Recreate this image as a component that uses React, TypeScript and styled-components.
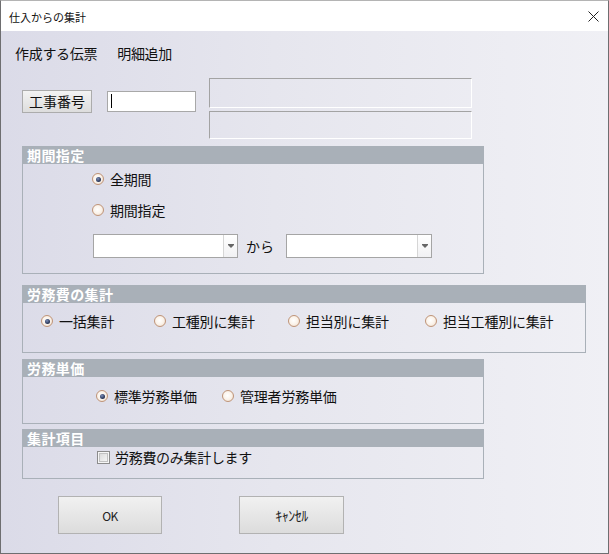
import React from 'react';
import styled, { createGlobalStyle } from 'styled-components';

const GlobalStyle = createGlobalStyle`
  html, body {
    margin: 0;
    padding: 0;
    background: #ffffff;
  }
  * {
    box-sizing: border-box;
  }
`;

const FONT = `"Noto Sans CJK JP", "Noto Sans", sans-serif`;

const Window = styled.div`
  width: 609px;
  height: 554px;
  display: flex;
  flex-direction: column;
  border: 1px solid #6e6e70;
  border-top-color: #b4b4b4;
  font-family: ${FONT};
  color: #111;
  overflow: hidden;
`;

const TitleBar = styled.div`
  height: 30px;
  flex-shrink: 0;
  display: flex;
  align-items: center;
  justify-content: space-between;
  padding: 0 9px 0 8px;
  background: #ffffff;
`;

const Title = styled.span`
  font-size: 11px;
  line-height: 14px;
  margin-top: 1px;
`;

const CloseIcon = styled.svg`
  width: 11px;
  height: 11px;
  margin-top: 1px;
`;

const Body = styled.div`
  flex: 1;
  display: flex;
  flex-direction: column;
  align-items: flex-start;
  padding: 12px 0 0 21px;
  background: linear-gradient(to right, #dbdbe8 0%, #e6e6ee 45%, #f0f0f5 100%);
`;

const InfoRow = styled.div`
  display: flex;
  gap: 20px;
  height: 20px;
  margin-left: -7px;
  font-size: 14px;
  line-height: 20px;
  letter-spacing: -0.3px;
`;

const JobRow = styled.div`
  display: flex;
  align-items: flex-start;
  margin-top: 15px;
`;

const JobButton = styled.button`
  width: 70px;
  height: 23px;
  margin-top: 12px;
  padding: 0;
  font-family: ${FONT};
  font-size: 14px;
  line-height: 21px;
  color: #111;
  border: 1px solid #acacac;
  background: linear-gradient(#f3f3f3, #dddddd);
`;

const TextInput = styled.div`
  position: relative;
  width: 89px;
  height: 21px;
  margin: 13px 0 0 15px;
  background: #ffffff;
  border: 1px solid #a8a8a8;
`;

const Caret = styled.span`
  position: absolute;
  left: 3px;
  top: 2px;
  width: 1px;
  height: 14px;
  background: #000;
`;

const DisplayStack = styled.div`
  display: flex;
  flex-direction: column;
  gap: 3px;
  margin-left: 13px;
`;

const DisplayBox = styled.div<{ h: number }>`
  width: 263px;
  height: ${({ h }) => h}px;
  border-top: 1px solid #a3a3a3;
  border-left: 1px solid #a3a3a3;
  border-right: 1px solid #ffffff;
  border-bottom: 1px solid #ffffff;
`;

const Group = styled.div<{ w: number; h: number; mt: number }>`
  width: ${({ w }) => w}px;
  height: ${({ h }) => h}px;
  margin-top: ${({ mt }) => mt}px;
  display: flex;
  flex-direction: column;
  border: 1px solid #a9b0b8;
  border-top: none;
`;

const GroupHeader = styled.div`
  height: 18px;
  margin: 0 -1px;
  padding-left: 5px;
  background: #a9b0b8;
  color: #ffffff;
  font-size: 14px;
  font-weight: 700;
  line-height: 18px;
  letter-spacing: 0.4px;
`;

const GroupContent = styled.div<{ pl: number; pt: number }>`
  display: flex;
  flex-direction: column;
  align-items: flex-start;
  padding: ${({ pt }) => pt}px 0 0 ${({ pl }) => pl}px;
`;

const OptionRow = styled.div<{ mt?: number }>`
  display: flex;
  align-items: center;
  height: 20px;
  margin-top: ${({ mt }) => mt || 0}px;
`;

const RadioItem = styled.label<{ w?: number }>`
  display: flex;
  align-items: center;
  gap: 6px;
  height: 20px;
  width: ${({ w }) => (w ? `${w}px` : 'auto')};
  font-size: 14px;
  line-height: 20px;
  letter-spacing: -0.2px;
  white-space: nowrap;
`;

const RadioDot = styled.span<{ checked?: boolean }>`
  position: relative;
  width: 12px;
  height: 12px;
  flex-shrink: 0;
  border-radius: 50%;
  border: 1px solid #bf9478;
  background: radial-gradient(circle at 45% 45%, #ffffff 0%, #fbf3ea 50%, #ead5c2 100%);

  &::after {
    content: '';
    display: ${({ checked }) => (checked ? 'block' : 'none')};
    position: absolute;
    left: 2.5px;
    top: 2.5px;
    width: 5px;
    height: 5px;
    border-radius: 50%;
    background: radial-gradient(circle at 40% 35%, #7d8fb8 0%, #2c3a5e 60%, #1c2540 100%);
  }
`;

const CheckItem = styled.label`
  display: flex;
  align-items: center;
  gap: 5px;
  height: 20px;
  font-size: 14px;
  line-height: 20px;
  letter-spacing: -0.3px;
`;

const CheckBox = styled.span`
  position: relative;
  width: 13px;
  height: 13px;
  flex-shrink: 0;
  border: 1px solid #8c8c8c;
  background: #f6f6f6;

  &::after {
    content: '';
    position: absolute;
    inset: 1px;
    border: 1px solid #c2c2c2;
    background: linear-gradient(135deg, #dcdcdc, #f5f5f5);
  }
`;

const ComboRow = styled.div`
  display: flex;
  align-items: center;
  margin-top: 14px;
  margin-left: 1px;
`;

const Combo = styled.div<{ w: number }>`
  display: flex;
  width: ${({ w }) => w}px;
  height: 24px;
  background: #ffffff;
  border: 1px solid #a5a5a5;
`;

const ComboField = styled.div`
  flex: 1;
`;

const ComboArrow = styled.div`
  width: 14px;
  display: flex;
  align-items: center;
  justify-content: center;
  border-left: 1px solid #d6d6d6;
  background: linear-gradient(#ffffff, #f1f1f3);
`;

const KaraLabel = styled.span`
  margin: 0 12px 0 8px;
  font-size: 14px;
  line-height: 20px;
`;

const ButtonRow = styled.div`
  display: flex;
  gap: 77px;
  margin: 17px 0 0 36px;
`;

const DialogButton = styled.button<{ w: number; fs: number }>`
  width: ${({ w }) => w}px;
  height: 38px;
  padding: 0;
  font-family: ${FONT};
  font-size: ${({ fs }) => fs}px;
  font-weight: 400;
  color: #222;
  letter-spacing: -0.5px;
  border: 1px solid #b2b2b2;
  background: linear-gradient(#f1f1f1, #dcdcdc);
`;

const Arrow = () => (
  <svg width="6" height="5" viewBox="0 0 6 5">
    <path d="M0 0.5h6M0.5 1.5h5M1.5 2.5h3M2.5 3.5h1" stroke="#666" strokeWidth="1" />
  </svg>
);

const Radio = ({ label, checked, w }: { label: string; checked?: boolean; w?: number }) => (
  <RadioItem w={w}>
    <RadioDot checked={checked} />
    {label}
  </RadioItem>
);

export default function App() {
  return (
    <>
      <GlobalStyle />
      <Window>
        <TitleBar>
          <Title>仕入からの集計</Title>
          <CloseIcon viewBox="0 0 11 11">
            <path d="M0.5 0.5L10.5 10.5M10.5 0.5L0.5 10.5" stroke="#222" strokeWidth="1" />
          </CloseIcon>
        </TitleBar>

        <Body>
          <InfoRow>
            <span>作成する伝票</span>
            <span>明細追加</span>
          </InfoRow>

          <JobRow>
            <JobButton>工事番号</JobButton>
            <TextInput>
              <Caret />
            </TextInput>
            <DisplayStack>
              <DisplayBox h={30} />
              <DisplayBox h={28} />
            </DisplayStack>
          </JobRow>

          <Group w={462} h={128} mt={7}>
            <GroupHeader>期間指定</GroupHeader>
            <GroupContent pl={69} pt={5}>
              <Radio label="全期間" checked />
              <OptionRow mt={11}>
                <Radio label="期間指定" />
              </OptionRow>
              <ComboRow>
                <Combo w={145}>
                  <ComboField />
                  <ComboArrow>
                    <Arrow />
                  </ComboArrow>
                </Combo>
                <KaraLabel>から</KaraLabel>
                <Combo w={146}>
                  <ComboField />
                  <ComboArrow>
                    <Arrow />
                  </ComboArrow>
                </Combo>
              </ComboRow>
            </GroupContent>
          </Group>

          <Group w={564} h={68} mt={11}>
            <GroupHeader>労務費の集計</GroupHeader>
            <GroupContent pl={18} pt={8}>
              <OptionRow>
                <Radio label="一括集計" checked w={113} />
                <Radio label="工種別に集計" w={134} />
                <Radio label="担当別に集計" w={137} />
                <Radio label="担当工種別に集計" />
              </OptionRow>
            </GroupContent>
          </Group>

          <Group w={462} h={65} mt={6}>
            <GroupHeader>労務単価</GroupHeader>
            <GroupContent pl={73} pt={9}>
              <OptionRow>
                <Radio label="標準労務単価" checked w={126} />
                <Radio label="管理者労務単価" />
              </OptionRow>
            </GroupContent>
          </Group>

          <Group w={462} h={50} mt={5}>
            <GroupHeader>集計項目</GroupHeader>
            <GroupContent pl={74} pt={0}>
              <CheckItem>
                <CheckBox />
                労務費のみ集計します
              </CheckItem>
            </GroupContent>
          </Group>

          <ButtonRow>
            <DialogButton w={104} fs={12}>OK</DialogButton>
            <DialogButton w={105} fs={14}>ｷｬﾝｾﾙ</DialogButton>
          </ButtonRow>
        </Body>
      </Window>
    </>
  );
}
